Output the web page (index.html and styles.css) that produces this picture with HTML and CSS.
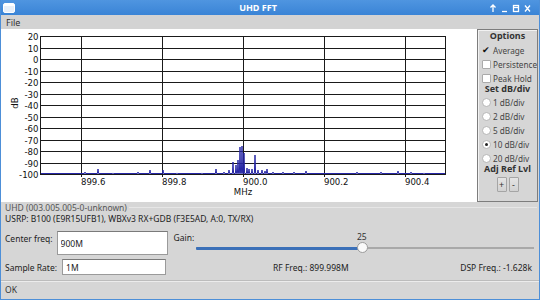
FILE: index.html
```html
<!DOCTYPE html>
<html lang="en">
  <head>
    <meta charset="UTF-8" />
    <title>UHD FFT</title>
    <link rel="stylesheet" href="styles.css">
  </head>
  <body>
    <div class="window">
      <div class="titlebar">
        <svg class="app-icon" width="12" height="10" viewBox="0 0 12 10">
          <rect x="0.5" y="0.5" width="11" height="9" rx="1.5" fill="#e8f0fa" stroke="#ffffff" />
          <rect x="1" y="1" width="10" height="2" fill="#ffffff" />
        </svg>
        <span class="title">UHD FFT</span>
        <svg class="wm-buttons" width="48" height="10" viewBox="0 0 48 10">
          <g stroke="#ffffff" stroke-width="1.3" fill="none">
            <path d="M4 9 V2 M1.5 4.5 L4 2 L6.5 4.5" />
            <path d="M13 8.5 H18" />
            <rect x="24.5" y="2.5" width="5" height="6" />
            <path d="M25 4.5 H29" />
            <path d="M36 2.5 L41 8.5 M41 2.5 L36 8.5" />
          </g>
        </svg>
      </div>

      <div class="menubar"><span class="menu-item">File</span></div>

      <div class="main">
        <div class="plot">
          <svg id="fft" width="476" height="173"></svg>
        </div>
        <div class="options">
          <div class="opt-title">Options</div>
          <div class="opt-row"><span class="check checked">&#10004;</span>Average</div>
          <div class="opt-row"><span class="check"></span>Persistence</div>
          <div class="opt-row"><span class="check"></span>Peak Hold</div>
          <div class="opt-title">Set dB/div</div>
          <div class="opt-row"><span class="radio"></span>1 dB/div</div>
          <div class="opt-row"><span class="radio"></span>2 dB/div</div>
          <div class="opt-row"><span class="radio"></span>5 dB/div</div>
          <div class="opt-row"><span class="radio selected"></span>10 dB/div</div>
          <div class="opt-row"><span class="radio"></span>20 dB/div</div>
          <div class="opt-title">Adj Ref Lvl</div>
          <div class="ref-buttons">
            <button class="ref-btn">+</button>
            <button class="ref-btn">-</button>
          </div>
        </div>
      </div>

      <div class="device">
        <div class="group-title">
          <span>UHD (003.005.005-0-unknown)</span>
          <span class="group-line"></span>
        </div>
        <div class="device-line">USRP: B100 (E9R15UFB1), WBXv3 RX+GDB (F3E5AD, A:0, TX/RX)</div>
      </div>

      <div class="controls">
        <div class="row row-top">
          <span class="field-label">Center freq:</span>
          <input class="field center-freq" value="900M" />
          <span class="gain-label">Gain:</span>
          <div class="gain">
            <div class="gain-value-row"><span class="gain-value" style="left: 49%">25</span></div>
            <div class="track">
              <div class="fill" style="width: 49%"></div>
              <div class="thumb" style="left: 49%"></div>
            </div>
          </div>
        </div>
        <div class="row row-bottom">
          <span class="field-label">Sample Rate:</span>
          <input class="field sample-rate" value="1M" />
          <span class="rf-freq">RF Freq.: 899.998M</span>
          <span class="dsp-freq">DSP Freq.: -1.628k</span>
        </div>
      </div>

      <div class="statusbar">OK</div>
    </div>

    <script>
      function drawPlot() {
        const NS = "http://www.w3.org/2000/svg";
        const svg = document.getElementById("fft");
        const x0 = 39, x1 = 445, y0 = 7, y1 = 145;

        function add(tag, attrs, text) {
          const node = document.createElementNS(NS, tag);
          for (const k in attrs) node.setAttribute(k, attrs[k]);
          if (text) node.textContent = text;
          svg.appendChild(node);
          return node;
        }

        // horizontal grid + dB labels
        for (let i = 0; i <= 12; i++) {
          const y = Math.round(y0 + i * 11.5) + 0.5;
          add("line", { x1: x0, y1: y, x2: x1, y2: y, class: "grid" });
          add("text", { x: 37.5, y: y + 3.5, "text-anchor": "end", class: "tick" }, String(20 - i * 10));
        }

        // vertical grid + MHz labels
        ["899.6", "899.8", "900.0", "900.2", "900.4"].forEach((f) => {
          const x = Math.round(x0 + (parseFloat(f) - 899.5) * (x1 - x0)) + 0.5;
          add("line", { x1: x, y1: y0, x2: x, y2: y1 + 3, class: "grid" });
          add("text", { x: x - 0.5, y: 156, class: "tick" }, f);
        });

        add("rect", { x: x0 + 0.5, y: y0 + 0.5, width: x1 - x0 - 1, height: y1 - y0, class: "frame" });
        add("text", { x: 242, y: 166, "text-anchor": "middle", class: "tick" }, "MHz");
        add("text", { x: 0, y: 0, "text-anchor": "middle", class: "tick", transform: "translate(17 74) rotate(-90)" }, "dB");

        // spectrum spikes: [x, top y] in plot coords
        const spikes = [
          [84, 143], [97, 140], [112, 144], [137, 143], [149, 141], [162, 141], [176, 144],
          [201, 144], [215, 140], [223, 143], [228, 141], [232, 133], [235, 136], [237, 131],
          [239, 118], [241, 117], [243, 124], [246, 139], [248, 140], [251, 140],
          [254, 126], [257, 141], [261, 141], [264, 142], [266, 140], [272, 143], [282, 143],
          [293, 143], [305, 142], [356, 143], [380, 143], [397, 142], [410, 143], [423, 144]
        ];
        let d = "M" + (x0 + 1) + " " + (y1 - 0.5);
        spikes.forEach(([x, y]) => {
          d += " L" + (x - 0.6) + " " + (y1 - 0.5) + " L" + x + " " + y + " L" + (x + 0.6) + " " + (y1 - 0.5);
        });
        d += " L" + (x1 - 1) + " " + (y1 - 0.5);
        add("path", { d: d, class: "trace" });
      }

      drawPlot();
    </script>
  </body>
</html>
```

FILE: styles.css
```css
* {
  box-sizing: border-box;
}

body {
  margin: 0;
  font-family: "Noto Sans", sans-serif;
  font-size: 8.5px;
  color: #333;
  background: #d6d6d6;
}

.window {
  width: 540px;
  height: 300px;
  overflow: hidden;
  background: #d6d6d6;
  border: 1px solid #4d8fd8;
  border-top: none;
}

.titlebar {
  height: 15px;
  margin: 0 -1px;
  display: flex;
  align-items: center;
  background: linear-gradient(#4f95e0, #3a84d6);
  color: white;
}

.app-icon {
  margin-left: 3px;
}

.title {
  flex: 1;
  text-align: center;
  font-weight: bold;
  font-size: 9px;
  padding-left: 12px;
}

.wm-buttons {
  margin-right: 3px;
}

.menubar {
  height: 14px;
  display: flex;
  align-items: center;
  background: #d3d3d3;
  font-size: 9px;
}

.menu-item {
  padding-left: 5px;
}

.main {
  height: 173px;
  display: flex;
}

.plot {
  width: 476px;
  background: white;
}

#fft {
  display: block;
}

#fft .grid {
  stroke: #1a1a1a;
  stroke-width: 1;
}

#fft .frame {
  fill: none;
  stroke: #1a1a1a;
  stroke-width: 1;
}

#fft .tick {
  font-family: "DejaVu Sans Condensed", "DejaVu Sans", sans-serif;
  font-stretch: condensed;
  font-size: 9.5px;
  fill: #111;
}

#fft .trace {
  fill: none;
  stroke: #2626a6;
  stroke-width: 1;
}

.options {
  width: 61px;
  margin-right: 1px;
  border: 1px solid #7d7d7d;
  box-shadow: inset 1px 1px 0 #f2f2f2;
  display: flex;
  flex-direction: column;
  overflow: hidden;
  white-space: nowrap;
}

.opt-title {
  height: 12px;
  line-height: 12px;
  text-align: center;
  font-weight: bold;
  font-size: 9px;
  color: #333;
}

.options .opt-title:first-child {
  margin-bottom: 1px;
}

.opt-row {
  height: 14px;
  display: flex;
  align-items: center;
  padding-left: 4px;
  color: #444;
  font-size: 8.2px;
}

.check {
  flex: none;
  width: 9px;
  height: 9px;
  margin-right: 2px;
  border: 1px solid #aaa;
  border-radius: 1px;
  background: white;
  font-size: 9px;
  line-height: 8px;
  color: #111;
}

.check.checked {
  border: none;
  background: none;
}

.radio {
  flex: none;
  width: 9px;
  height: 9px;
  margin-right: 2px;
  border: 1px solid #b5b5b5;
  border-radius: 50%;
  background: white;
  position: relative;
}

.radio.selected::after {
  content: "";
  position: absolute;
  left: 2px;
  top: 2px;
  width: 3px;
  height: 3px;
  border-radius: 50%;
  background: #222;
}

.opt-row + .opt-title {
  margin-top: -2px;
}

.ref-buttons {
  display: flex;
  justify-content: center;
  gap: 2px;
  margin-top: 2px;
}

.ref-btn {
  width: 10px;
  height: 15px;
  padding: 0;
  font-family: "Noto Sans", sans-serif;
  font-size: 9px;
  color: #333;
  background: linear-gradient(#e4e4e4, #d2d2d2);
  border: 1px solid #a5a5a5;
  border-radius: 1px;
}

.device {
  height: 26px;
  padding-left: 4px;
}

.group-title {
  height: 11px;
  display: flex;
  align-items: center;
  color: #555;
}

.group-line {
  flex: 1;
  margin-left: 2px;
  margin-right: 2px;
  border-top: 1px solid #e6e6e6;
}

.device-line {
  height: 12px;
  line-height: 12px;
  color: #222;
}

.controls {
  padding: 0 4px;
}

.row {
  display: flex;
  align-items: center;
}

.row-top {
  height: 24px;
  margin-top: 3px;
  align-items: flex-start;
}

.row-bottom {
  height: 16px;
  margin-top: 4px;
}

.field-label {
  color: #222;
}

.row-top .field-label {
  margin-top: 2px;
}

.field {
  font-family: "Noto Sans", sans-serif;
  font-size: 8.5px;
  color: #222;
  background: white;
  border: 1px solid #9a9a9a;
  border-top-color: #7a7a7a;
  padding: 0 3px;
  outline: none;
}

.center-freq {
  width: 111px;
  height: 24px;
  margin-left: 4px;
}

.sample-rate {
  width: 104px;
  height: 16px;
  margin-left: 5px;
}

.gain-label {
  margin-left: 6px;
  margin-top: 1px;
  color: #222;
}

.gain {
  flex: 1;
  margin-left: 2px;
  margin-right: 1px;
}

.gain-value-row {
  height: 12px;
  position: relative;
}

.gain-value {
  position: absolute;
  transform: translateX(-50%);
  top: 0;
  color: #333;
}

.track {
  position: relative;
  height: 2px;
  margin-top: 4px;
  background: #a9a9a9;
}

.fill {
  height: 3px;
  margin-top: -0.5px;
  background: #3b70b8;
  border-radius: 1px;
}

.thumb {
  position: absolute;
  top: -5px;
  width: 11px;
  height: 11px;
  margin-left: -5px;
  border-radius: 50%;
  background: #fafafa;
  border: 1px solid #9c9c9c;
}

.rf-freq {
  margin-left: 107px;
  flex: 1;
  color: #222;
}

.dsp-freq {
  margin-right: 3px;
  color: #222;
}

.statusbar {
  height: 18px;
  margin-top: 5px;
  padding-left: 4px;
  display: flex;
  align-items: center;
  border-top: 1px solid #bcbcbc;
  box-shadow: inset 0 1px 0 #ececec;
  color: #333;
}
```
